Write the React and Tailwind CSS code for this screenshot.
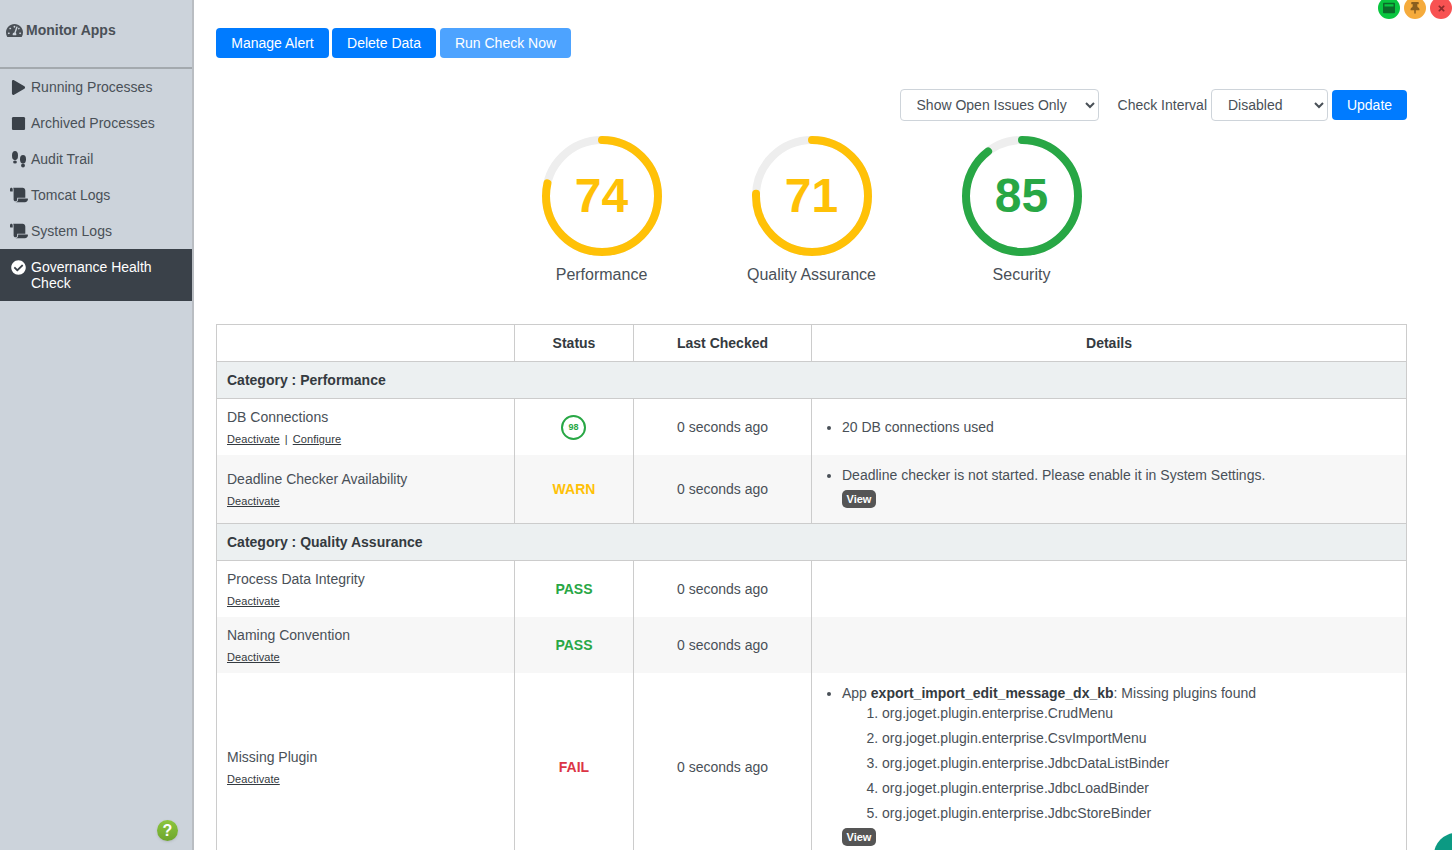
import { FaTachometerAlt, FaPlay, FaStop, FaScroll, FaCheckCircle, FaThumbtack, FaTimes, FaWindowMaximize } from 'react-icons/fa'

const FootprintsIcon = () => (
  <svg width="16" height="17" viewBox="0 0 16 17" fill="currentColor">
    <ellipse cx="4" cy="4.6" rx="3" ry="4.6" />
    <ellipse cx="4" cy="11" rx="1.9" ry="1.5" />
    <ellipse cx="12" cy="8.2" rx="3" ry="4.2" />
    <ellipse cx="12" cy="14.6" rx="1.9" ry="2" />
  </svg>
)

const menuItems = [
  { label: 'Running Processes', icon: <FaPlay className="text-[15px]" /> },
  { label: 'Archived Processes', icon: <FaStop className="text-[15px]" /> },
  { label: 'Audit Trail', icon: <FootprintsIcon /> },
  { label: 'Tomcat Logs', icon: <FaScroll className="text-[18px] -ml-px" /> },
  { label: 'System Logs', icon: <FaScroll className="text-[18px] -ml-px" /> }
]

const Sidebar = () => (
  <aside className="w-[194px] shrink-0 h-full bg-[#ccd3db] border-r-2 border-[#b9bdc2] relative">
    <div className="h-[69px] border-b-2 border-[#a3a9ae] pl-[6px] pt-[21px] flex items-start gap-[3px] text-[#4a5057] font-bold text-sm leading-[18px]">
      <FaTachometerAlt className="text-[17px] mt-px" />
      Monitor Apps
    </div>
    {menuItems.map((item) => (
      <div key={item.label} className="h-9 flex items-center text-sm text-[#495057]">
        <span className="w-[31px] pl-[11px] flex items-center text-[#3a4149]">{item.icon}</span>
        {item.label}
      </div>
    ))}
    <div className="h-[52px] bg-[#3a4149] text-white text-sm leading-4 flex items-start pt-[10px]">
      <span className="w-[31px] pl-[11px] pt-px"><FaCheckCircle className="text-[15px]" /></span>
      <span className="w-[140px]">Governance Health Check</span>
    </div>
    <div className="absolute left-[157px] top-[820px] w-[21px] h-[21px] rounded-full bg-linear-to-b from-[#8cc63f] to-[#6ea52c] shadow-sm text-white font-bold text-base leading-[21px] text-center">?</div>
  </aside>
)

const Ring = ({ score, label, color, stroke }) => {
  const r = 56
  const circ = 2 * Math.PI * r
  // the drawn arc runs a little past the score in the original gauge
  const arc = score + 4.5
  return (
    <div className="w-[210px] flex flex-col items-center">
      <div className="relative w-[120px] h-[120px]">
        <svg width="120" height="120" className="-rotate-90">
          <circle cx="60" cy="60" r={r} fill="none" stroke="#eeeeee" strokeWidth="8" />
          <circle cx="60" cy="60" r={r} fill="none" stroke={stroke} strokeWidth="8" strokeLinecap="round" strokeDasharray={`${(circ * arc) / 100} ${circ}`} />
        </svg>
        <div className={`absolute inset-0 flex items-center justify-center text-5xl font-bold ${color}`}>{score}</div>
      </div>
      <div className="mt-[7px] text-base leading-6 text-[#495057]">{label}</div>
    </div>
  )
}

const NameCell = ({ name, configure }) => (
  <td className="border-x border-[#cccccc] px-[10px] py-2 align-middle">
    <div className="leading-5">{name}</div>
    <div className="mt-1 leading-4 text-[11px] tracking-[0.08px] text-[#343a40]">
      <span className="underline">Deactivate</span>
      {configure && (
        <>
          <span className="mx-[5px]">|</span>
          <span className="underline">Configure</span>
        </>
      )}
    </div>
  </td>
)

const cellClass = 'border-x border-[#cccccc] text-center align-middle'
const detailClass = 'border-x border-[#cccccc] align-middle py-[10px]'
const detailTopClass = 'border-x border-[#cccccc] align-top py-[10px]'

const ViewBadge = () => (
  <span className="inline-block w-[34px] h-[18px] rounded-[5px] bg-[#555555] text-white text-[11px] font-bold leading-[18px] text-center">View</span>
)

const Category = ({ children }) => (
  <tr className="h-[37px] bg-[#ecf0f1]">
    <td colSpan={4} className="border border-[#cccccc] px-[10px] font-bold text-[#343a40]">Category : {children}</td>
  </tr>
)

const plugins = ['CrudMenu', 'CsvImportMenu', 'JdbcDataListBinder', 'JdbcLoadBinder', 'JdbcStoreBinder']

const App = () => (
  <div className="w-[1452px] h-[850px] overflow-hidden flex relative bg-white text-sm text-[#495057] font-['Liberation_Sans',Arial,sans-serif]">
    <Sidebar />

    <main className="flex-1 pl-[22px] pr-[45px] pt-[28px]">
      <div className="flex gap-[3px] h-[30px]">
        <button className="w-[113px] rounded bg-[#007bff] text-white">Manage Alert</button>
        <button className="w-[104px] rounded bg-[#007bff] text-white">Delete Data</button>
        <button className="w-[131px] ml-px rounded bg-[#4da3ff] text-white">Run Check Now</button>
      </div>

      <div className="mt-[31px] flex items-center justify-end h-8">
        <select className="w-[199px] h-8 pl-3 rounded border border-[#ced4da] bg-white text-[#495057]">
          <option>Show Open Issues Only</option>
        </select>
        <span className="ml-[19px] mr-[4px]">Check Interval</span>
        <select className="w-[117px] h-8 pl-3 rounded border border-[#ced4da] bg-white text-[#495057]">
          <option>Disabled</option>
        </select>
        <button className="w-[75px] h-[30px] ml-1 rounded bg-[#007bff] text-white">Update</button>
      </div>

      <div className="mt-[15px] flex justify-center">
        <Ring score={74} label="Performance" color="text-[#ffc107]" stroke="#ffc107" />
        <Ring score={71} label="Quality Assurance" color="text-[#ffc107]" stroke="#ffc107" />
        <Ring score={85} label="Security" color="text-[#28a745]" stroke="#28a745" />
      </div>

      <table className="mt-[37px] w-[1191px] table-fixed border-collapse">
        <thead>
          <tr className="h-[37px] text-[#343a40]">
            <th className="w-[298px] border border-[#cccccc]"></th>
            <th className="w-[119px] border border-[#cccccc] font-bold">Status</th>
            <th className="w-[178px] border border-[#cccccc] font-bold">Last Checked</th>
            <th className="border border-[#cccccc] font-bold">Details</th>
          </tr>
        </thead>
        <tbody>
          <Category>Performance</Category>
          <tr className="h-14">
            <NameCell name="DB Connections" configure />
            <td className={cellClass}>
              <span className="inline-flex w-[25px] h-[25px] -ml-px rounded-full border-2 border-[#28a745] items-center justify-center text-[9px] font-bold text-[#28a745]">98</span>
            </td>
            <td className={cellClass}>0 seconds ago</td>
            <td className={detailClass}>
              <ul className="list-disc pl-[30px]"><li className="leading-5">20 DB connections used</li></ul>
            </td>
          </tr>
          <tr className="h-[68px] bg-[#f7f7f7]">
            <NameCell name="Deadline Checker Availability" />
            <td className={`${cellClass} font-bold text-[#ffc107]`}>WARN</td>
            <td className={cellClass}>0 seconds ago</td>
            <td className={detailTopClass}>
              <ul className="list-disc pl-[30px]">
                <li className="leading-5">
                  Deadline checker is not started. Please enable it in System Settings.
                  <div className="mt-[5px] h-[18px] flex"><ViewBadge /></div>
                </li>
              </ul>
            </td>
          </tr>
          <Category>Quality Assurance</Category>
          <tr className="h-14">
            <NameCell name="Process Data Integrity" />
            <td className={`${cellClass} font-bold text-[#28a745]`}>PASS</td>
            <td className={cellClass}>0 seconds ago</td>
            <td className={detailClass}></td>
          </tr>
          <tr className="h-14 bg-[#f7f7f7]">
            <NameCell name="Naming Convention" />
            <td className={`${cellClass} font-bold text-[#28a745]`}>PASS</td>
            <td className={cellClass}>0 seconds ago</td>
            <td className={detailClass}></td>
          </tr>
          <tr className="h-[188px]">
            <NameCell name="Missing Plugin" />
            <td className={`${cellClass} font-bold text-[#dc3545]`}>FAIL</td>
            <td className={cellClass}>0 seconds ago</td>
            <td className={detailTopClass}>
              <ul className="list-disc pl-[30px]">
                <li className="leading-5">
                  App <b className="text-[#343a40]">export_import_edit_message_dx_kb</b>: Missing plugins found
                  <ol className="list-decimal pl-10">
                    {plugins.map((p) => (
                      <li key={p} className="leading-5 mb-[5px]">org.joget.plugin.enterprise.{p}</li>
                    ))}
                  </ol>
                  <div className="h-[18px] flex"><ViewBadge /></div>
                </li>
              </ul>
            </td>
          </tr>
        </tbody>
      </table>
    </main>

    {/* window buttons, over the page corner */}
    <div className="absolute right-0 -top-[3px] flex gap-1">
      <span className="w-[22px] h-[22px] rounded-full bg-[#0ac640] flex items-center justify-center text-[#0b6b2a] text-[12px]"><FaWindowMaximize /></span>
      <span className="w-[22px] h-[22px] rounded-full bg-[#f5ab3c] flex items-center justify-center text-[#8a5e1e] text-[12px]"><FaThumbtack /></span>
      <span className="w-[22px] h-[22px] rounded-full bg-[#f85252] flex items-center justify-center text-[#8e2b2b] text-[9px]"><FaTimes /></span>
    </div>
    <div className="absolute left-[1434px] top-[833px] w-11 h-11 rounded-full bg-[#0c9a83]"></div>
  </div>
)

export default App
